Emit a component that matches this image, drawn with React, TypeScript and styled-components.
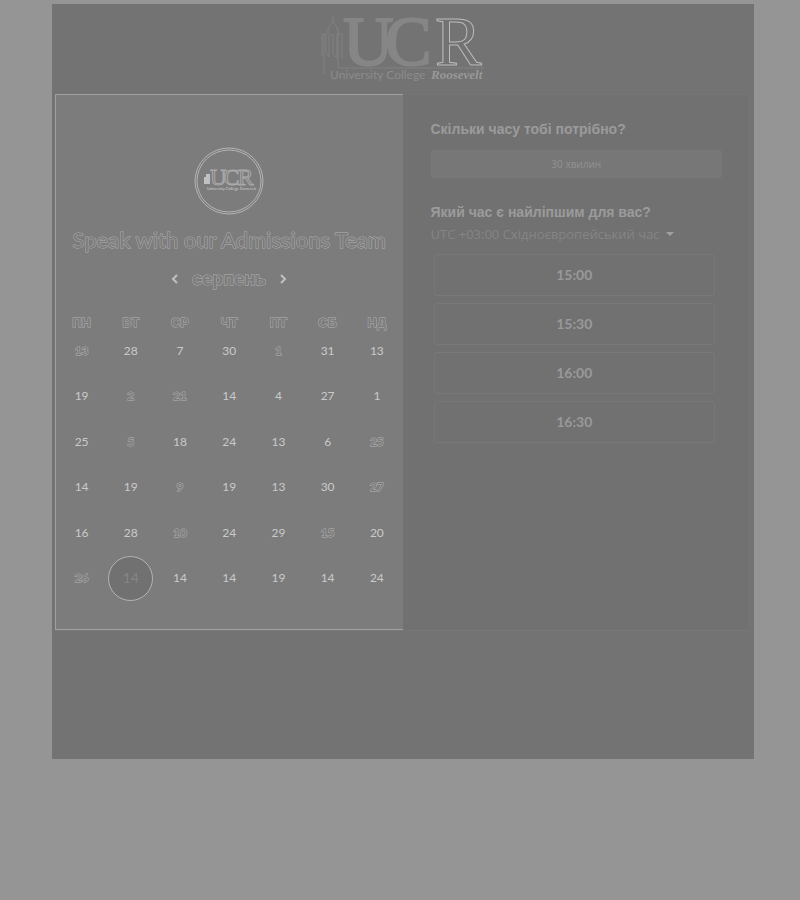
import React, { useState } from "react";
import styled, { createGlobalStyle, css } from "styled-components";

const Global = createGlobalStyle`
  * { box-sizing: border-box; }
  body { margin: 0; background: #959595; font-family: "Liberation Sans", sans-serif; }
  button, select { font: inherit; color: inherit; background: none; border: 0; padding: 0; margin: 0; cursor: pointer; }
`;

const outlined = css`
  color: #7c7c7c;
  -webkit-text-stroke: 1px #b2b2b2;
  paint-order: stroke fill;
`;

const Page = styled.main`
  margin: 4px 46px 0 52px;
  padding: 0 4px 128px 3px;
  background: #737373;
`;

const Header = styled.header`
  display: flex;
  justify-content: center;
  height: 90px;
`;

const Scheduler = styled.div`
  display: grid;
  grid-template-columns: 1fr 1fr;
  border-bottom: 1px solid #777777;
`;

const CalendarPanel = styled.section`
  display: flex;
  flex-direction: column;
  align-items: center;
  padding: 52px 1px 28px;
  background: #7c7c7c;
  border: 1px solid #a0a0a0;
  border-right-width: 0;
`;

const Title = styled.h1`
  ${outlined}
  margin: 11px 0 0;
  font: 400 22px/28px Lato, sans-serif;
  white-space: nowrap;
`;

const MonthNav = styled.div`
  display: flex;
  align-items: center;
  gap: 12px;
  height: 28px;
  margin-top: 11px;
`;

const MonthName = styled.h2`
  ${outlined}
  margin: 0;
  font-size: 18px;
  line-height: 28px;
`;

const Arrow = styled.button`
  display: flex;
  width: 10px;
  color: #c0c0c0;
`;

const Calendar = styled.table`
  width: 100%;
  margin-top: 25px;
  table-layout: fixed;
  border-collapse: collapse;
  text-align: center;
`;

const Weekday = styled.th`
  ${outlined}
  height: 10px;
  padding: 0;
  font-size: 13px;
  line-height: 10px;
  text-transform: uppercase;
`;

const DayCell = styled.td`
  height: 45px;
  padding: 0;
  tr:nth-child(even) > & { height: 46px; }
`;

const Day = styled.button<{ $open: boolean; $selected: boolean }>`
  display: block;
  width: 45px;
  height: 45px;
  margin: 0 auto;
  border-radius: 50%;
  font: 400 12px/44px Lato, sans-serif;
  color: #cacaca;
  ${(p) => p.$open && css`${outlined} font-weight: 700;`}
  ${(p) => p.$selected && css`
    background: #717171;
    border: 1px solid #b4b4b4;
    color: #858585;
    font-size: 14px;
    line-height: 40px;
  `}
`;

const TimesPanel = styled.section`
  padding: 24px 27px 0 28px;
  background: #717171;
  border-top: 1px solid #757575;
  border-right: 1px solid #757575;
`;

const Question = styled.h2`
  margin: 0;
  color: #9b9b9b;
  font-size: 14px;
  line-height: 20px;
`;

const Duration = styled.button`
  display: block;
  width: 100%;
  height: 28px;
  margin: 11px 0 24px;
  border-radius: 2px;
  background: #777777;
  color: #929292;
  font: 400 10px/26px "Open Sans", sans-serif;
`;

const Zone = styled.label`
  display: flex;
  align-items: center;
  gap: 5px;
  height: 24px;
  color: #858585;
`;

const ZoneSelect = styled.select`
  appearance: none;
  font: 400 13px/20px "Open Sans", sans-serif;
`;

const Slots = styled.ul`
  display: grid;
  gap: 7px;
  margin: 8px 7px 0 3px;
  padding: 0;
  list-style: none;
`;

const Slot = styled.button`
  display: block;
  width: 100%;
  height: 42px;
  border: 1px solid #787878;
  border-radius: 3px;
  color: #999999;
  font: 700 14px/40px Lato, sans-serif;
`;

const weekdays = ["пн", "вт", "ср", "чт", "пт", "сб", "нд"];
const weeks = [
  [13, 28, 7, 30, 1, 31, 13],
  [19, 2, 21, 14, 4, 27, 1],
  [25, 5, 18, 24, 13, 6, 25],
  [14, 19, 9, 19, 13, 30, 27],
  [16, 28, 10, 24, 29, 15, 20],
  [26, 14, 14, 14, 19, 14, 24],
];
const openDays = new Set(["0-0", "0-4", "1-1", "1-2", "2-1", "2-6", "3-2", "3-6", "4-2", "4-5", "5-0"]);
const times = ["15:00", "15:30", "16:00", "16:30"];

function Logo() {
  return (
    <svg width="166" height="84" viewBox="0 -8 166 84" role="img" aria-label="University College Roosevelt">
      <path fill="none" stroke="#828282" d="M4 62V22M2 45V22h4v19l3 4V23h4v19l4 4V22h5v25M8 22v-5l5-8V4M18 22v-5l-5-8M18 22v34h146" />
      <g fontFamily="Liberation Serif, serif" fontSize="70">
        <text x="23" y="53" fill="#868686" stroke="#868686" strokeWidth="2">U</text>
        <text x="65" y="53" fill="#868686" stroke="#868686" strokeWidth="2">C</text>
        <text x="115" y="53" fill="#737373" stroke="#bcbcbc">R</text>
      </g>
      <text x="10" y="67" fill="#8c8c8c" fontFamily="Lato, sans-serif" fontSize="12">University College</text>
      <text x="111" y="67" fill="#999999" fontFamily="Liberation Serif, serif" fontSize="13" fontWeight="700" fontStyle="italic">Roosevelt</text>
    </svg>
  );
}

function Badge() {
  return (
    <svg width="70" height="68" viewBox="0 0 70 68" role="img" aria-label="UCR">
      <g fill="none" stroke="#b5b5b5">
        <ellipse cx="35" cy="34" rx="34" ry="33" />
        <ellipse cx="35" cy="34" rx="32" ry="31" />
      </g>
      <path d="M10 30h2v-3h1v-3v3h3v10h-6z" fill="#c0c0c0" />
      <g fontFamily="Liberation Serif, serif" fontSize="23" fill="#7c7c7c" stroke="#aaaaaa">
        <text x="16" y="38">U</text>
        <text x="30" y="38">C</text>
        <text x="44" y="38">R</text>
      </g>
      <text x="13" y="43" fill="#d0d0d0" fontFamily="Lato, sans-serif" fontSize="4">University College</text>
      <text x="46" y="43" fill="#d0d0d0" fontFamily="Liberation Serif, serif" fontSize="4">Roosevelt</text>
    </svg>
  );
}

function Chevron({ next }: { next?: boolean }) {
  return (
    <svg width="10" height="10" viewBox="0 0 10 10" fill="none" stroke="currentColor" strokeWidth="2" aria-hidden="true">
      <path d={next ? "M3 1l4 4-4 4" : "M7 1L3 5l4 4"} />
    </svg>
  );
}

export default function App() {
  const [selected, setSelected] = useState("5-1");
  return (
    <>
      <Global />
      <Page>
        <Header><Logo /></Header>
        <Scheduler>
          <CalendarPanel>
            <Badge />
            <Title>Speak with our Admissions Team</Title>
            <MonthNav>
              <Arrow aria-label="Попередній місяць"><Chevron /></Arrow>
              <MonthName>серпень</MonthName>
              <Arrow aria-label="Наступний місяць"><Chevron next /></Arrow>
            </MonthNav>
            <Calendar>
              <thead>
                <tr>{weekdays.map((d) => <Weekday key={d} scope="col">{d}</Weekday>)}</tr>
              </thead>
              <tbody>
                {weeks.map((week, r) => (
                  <tr key={r}>
                    {week.map((day, c) => {
                      const id = `${r}-${c}`;
                      return (
                        <DayCell key={id}>
                          <Day $open={openDays.has(id)} $selected={selected === id} aria-pressed={selected === id} onClick={() => setSelected(id)}>
                            {day}
                          </Day>
                        </DayCell>
                      );
                    })}
                  </tr>
                ))}
              </tbody>
            </Calendar>
          </CalendarPanel>
          <TimesPanel>
            <Question>Скільки часу тобі потрібно?</Question>
            <Duration>30 хвилин</Duration>
            <Question>Який час є найліпшим для вас?</Question>
            <Zone>
              <ZoneSelect aria-label="Часовий пояс">
                <option>UTC +03:00 Східноєвропейський час</option>
              </ZoneSelect>
              <svg width="8" height="4" viewBox="0 0 8 4" aria-hidden="true"><path d="M0 0h8L4 4z" fill="#a0a0a0" /></svg>
            </Zone>
            <Slots>
              {times.map((t) => <li key={t}><Slot>{t}</Slot></li>)}
            </Slots>
          </TimesPanel>
        </Scheduler>
      </Page>
    </>
  );
}
